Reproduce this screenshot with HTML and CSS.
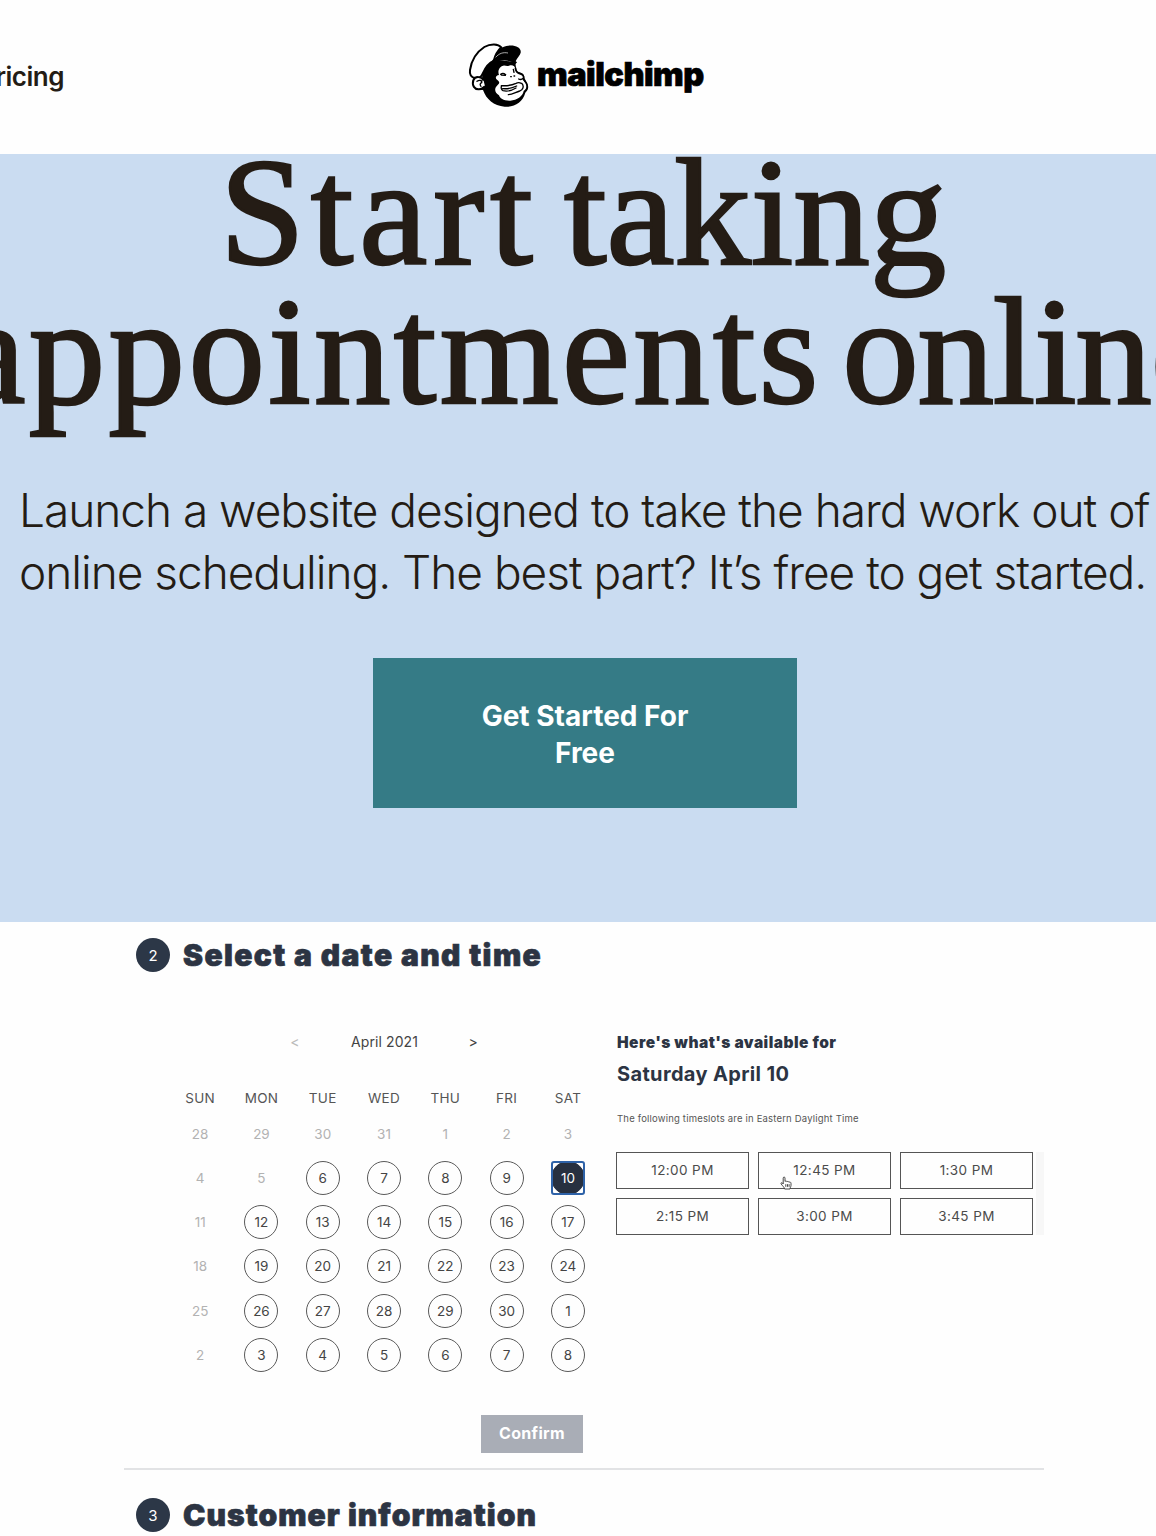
FILE: index.html
```html
<!DOCTYPE html>
<html lang="en">
<head>
<meta charset="utf-8">
<title>Mailchimp appointments</title>
<link rel="stylesheet" href="styles.css">
</head>
<body>
<header class="header">
  <nav class="nav"><a class="nav-link">Pricing</a></nav>
  <a class="brand" aria-label="Mailchimp">
    <svg class="brand-icon" viewBox="0 0 240 240" aria-hidden="true">
      <path fill="#000" d="M68 108C75 92 88 80 102 76L166 80C167 92 168 102 172 110C186 112 194 118 193 128L199 140C206 153 203 164 196 173C188 202 163 217 134 215C101 212 79 193 69 165C54 164 40 157 38 145C36 132 44 123 54 124C59 125 63 128 66 131Z"/>
      <path fill="#fff" d="M117 120C112 108 118 94 130 92C137 91 140 95 147 92C157 88 165 93 166 100C166 107 169 113 176 116C188 118 191 122 189 130C188 137 194 140 198 146C202 154 199 163 191 168C188 184 171 196 151 197C132 198 119 190 117 181C103 172 102 160 113 150C120 145 119 139 111 134C104 129 108 121 117 120Z"/>
      <path fill="#fff" stroke="#000" stroke-width="6" d="M101 78C88 83 76 98 68 116C64 126 56 131 46 129C32 127 28 119 30 105C34 78 50 51 73 36C92 25 115 26 124 37C113 47 105 62 101 78Z"/>
      <path fill="#000" d="M101 76C106 53 119 37 139 33C164 28 185 38 182 53C180 61 172 68 166 80C156 70 130 71 108 79Z"/>
      <path fill="none" stroke="#fff" stroke-width="2" d="M107 67C117 55 130 51 144 54"/>
      <path fill="none" stroke="#000" stroke-width="9" d="M98 79C128 68 154 71 168 85"/>
      <path fill="#fff" stroke="#000" stroke-width="6" d="M71 137C65 124 45 122 40 136C35 151 44 164 57 163C65 163 71 157 75 154"/>
      <path fill="none" stroke="#000" stroke-width="4" stroke-linecap="round" d="M51 139C59 133 67 137 65 143C60 145 59 149 63 154M122 118Q129 112 137 119M124 120L136 121M160 103L162 112M152 125H154M162 123H164"/>
      <path fill="none" stroke="#000" stroke-width="4" stroke-linecap="round" stroke-linejoin="round" d="M124 152C140 153 157 150 168 145Q176 141 184 145M125 152C122 158 124 165 129 167C144 171 158 165 168 159M128 161Q148 163 170 153M185 145C194 154 188 165 179 168C166 172 158 179 145 179M176 132Q183 136 190 130"/>
      <path fill="none" stroke="#000" stroke-width="5" d="M166 98C167 108 170 113 177 115C189 118 193 124 190 132C193 138 199 142 201 149C204 159 200 166 194 170"/>
    </svg>
    <span class="brand-name">mailchimp</span>
  </a>
</header>
<section class="hero">
  <h1 class="hero-title"><span class="title-top"><span class="w-start">Start </span><span class="w-taking">taking</span></span><br><span class="w-appointments">appointments </span><span class="w-online">online</span></h1>
  <p class="hero-copy">Launch a website designed to take the hard work out of<br>online scheduling. The best part? It’s free to get started.</p>
  <a class="cta">Get Started For<br>Free</a>
</section>
<main class="booking">
  <div class="step"><span class="step-num">2</span><h2 class="step-title">Select a date and time</h2></div>
  <div class="scheduler">
    <section class="calendar">
      <div class="month"><span class="prev">&lt;</span><span class="month-name">April 2021</span><span class="next">&gt;</span></div>
      <div class="weekdays"><span>SUN</span><span>MON</span><span>TUE</span><span>WED</span><span>THU</span><span>FRI</span><span>SAT</span></div>
      <div class="days">
        <span>28</span><span>29</span><span>30</span><span>31</span><span>1</span><span>2</span><span>3</span>
        <span>4</span><span>5</span><span class="open">6</span><span class="open">7</span><span class="open">8</span><span class="open">9</span><span class="open selected">10</span>
        <span>11</span><span class="open">12</span><span class="open">13</span><span class="open">14</span><span class="open">15</span><span class="open">16</span><span class="open">17</span>
        <span>18</span><span class="open">19</span><span class="open">20</span><span class="open">21</span><span class="open">22</span><span class="open">23</span><span class="open">24</span>
        <span>25</span><span class="open">26</span><span class="open">27</span><span class="open">28</span><span class="open">29</span><span class="open">30</span><span class="open">1</span>
        <span>2</span><span class="open">3</span><span class="open">4</span><span class="open">5</span><span class="open">6</span><span class="open">7</span><span class="open">8</span>
      </div>
      <button class="confirm">Confirm</button>
    </section>
    <section class="times">
      <h3 class="times-title">Here's what's available for</h3>
      <p class="times-date">Saturday April 10</p>
      <p class="times-note">The following timeslots are in Eastern Daylight Time</p>
      <div class="slots-area">
        <div class="slots">
          <span class="slot">12:00 PM</span>
          <span class="slot">12:45 PM
            <svg class="pointer" viewBox="0 0 12 14" aria-hidden="true"><path d="M3.2 8V2.2C3.2.6 5 .6 5 2.2V5.4C5.8 4.8 6.6 5 6.9 5.7C7.7 5.2 8.6 5.4 8.9 6.2C10 5.7 11 6.2 11 7.4V9.4C11 10.7 10.2 11 10 13H4.6C4.4 11.2 2.5 10 1.2 8C.5 6.6 1.9 6 3.2 8ZM5.8 8.2V10.8M7.5 8.2V10.8M9.1 8.2V10.8" fill="#fff" stroke="#333" stroke-width=".9"/></svg>
          </span>
          <span class="slot">1:30 PM</span>
          <span class="slot">2:15 PM</span>
          <span class="slot">3:00 PM</span>
          <span class="slot">3:45 PM</span>
        </div>
        <div class="scroll-track"></div>
      </div>
    </section>
  </div>
  <div class="step step-next"><span class="step-num">3</span><h2 class="step-title customer">Customer information</h2></div>
</main>
</body>
</html>
```
FILE: styles.css
```css
* { box-sizing: border-box; }
body {
  margin: 0;
  width: 1156px;
  height: 1536px;
  overflow: hidden;
  background: #fefefe;
  color: #241c15;
  font-family: Inter, "Liberation Sans", sans-serif;
}
h1, h2, h3, p { margin: 0; }

.header {
  display: grid;
  grid-template-columns: 460px auto 1fr;
  height: 154px;
}
.nav {
  display: flex;
  justify-content: flex-end;
  width: 64px;
  padding-top: 61px;
}
.nav-link { font-size: 26px; line-height: 32px; font-weight: 600; letter-spacing: -0.5px; }
.brand { display: flex; margin-top: 35px; color: #000; }
.brand-icon { width: 80px; height: 80px; flex: none; }
.brand-name {
  margin: 20px 0 0 -3px;
  font-size: 32.5px;
  line-height: 40px;
  font-weight: 900;
  letter-spacing: -0.5px;
  -webkit-text-stroke: 0.7px #000;
}

.hero {
  display: flex;
  flex-direction: column;
  align-items: center;
  height: 768px;
  overflow: hidden;
  background: #cadcf1;
}
.hero-title {
  margin: -11px 0 0 19px;
  font: 400 153px/139px "Liberation Serif", serif;
  -webkit-text-stroke: 2.6px #241c15;
  text-align: center;
  white-space: nowrap;
  flex: none;
}
.title-top { padding-right: 9px; }
.w-start { letter-spacing: 6px; word-spacing: -19px; }
.w-taking { letter-spacing: 0; }
.w-appointments { letter-spacing: 3.3px; word-spacing: -21px; }
.w-online { letter-spacing: -1.2px; }
.hero-copy {
  width: 1137px;
  margin: 58px 0 0 19px;
  font-size: 46px;
  line-height: 62px;
  font-weight: 300;
  letter-spacing: -1.03px;
  white-space: nowrap;
}
.cta {
  display: flex;
  align-items: center;
  justify-content: center;
  width: 424px;
  height: 150px;
  padding-top: 4px;
  margin: 55px 0 0 14px;
  background: #357b86;
  color: #fff;
  font-size: 28px;
  line-height: 37.5px;
  font-weight: 700;
  letter-spacing: 0;
  text-align: center;
}

.booking { width: 920px; margin-left: 124px; padding-top: 16px; color: #2c3443; }
.step { display: flex; align-items: center; gap: 13px; height: 34px; padding-left: 12px; }
.step-num {
  display: grid;
  place-items: center;
  width: 34px;
  height: 34px;
  border-radius: 50%;
  background: #2c3747;
  color: #fff;
  font-size: 15px;
}
.step-title {
  font-size: 30px;
  line-height: 34px;
  font-weight: 900;
  letter-spacing: 1.4px;
  -webkit-text-stroke: 0.7px #2c3443;
  white-space: nowrap;
}
.customer { letter-spacing: 1.05px; }

.scheduler {
  display: flex;
  height: 498px;
  border-bottom: 2px solid #e2e3e5;
  padding: 59px 0 0 45.5px;
}
.calendar { display: flex; flex-direction: column; width: 430px; margin-right: 17.5px; }
.month {
  display: grid;
  grid-template-columns: 1fr 120px 1fr;
  align-items: center;
  height: 20px;
  text-align: center;
  font-size: 14px;
  color: #444;
}
.month-name { letter-spacing: 0.1px; }
.prev { color: #bbb; text-align: right; padding-right: 25px; }
.next { text-align: left; padding-left: 24px; }
.weekdays, .days { display: grid; grid-template-columns: repeat(7, 61.3px); justify-items: center; align-items: center; }
.weekdays { height: 20px; margin-top: 37px; color: #555; font-size: 13.5px; letter-spacing: 0.3px; }
.days { grid-template-rows: 44px repeat(5, 44.2px); margin-top: 4px; font-size: 13.5px; color: #b2b2b2; }
.days span { display: grid; place-items: center; width: 34px; height: 34px; }
.days .open { border: 1px solid #5a5a5a; border-radius: 50%; color: #444; }
.days .selected { position: relative; background: #273040; border-color: #273040; color: #fff; }
.selected::after {
  content: "";
  position: absolute;
  inset: -1px;
  border: 2px solid #2e62a8;
  border-radius: 3px;
}
.confirm {
  width: 102px;
  height: 38px;
  margin: 38px 0 0 311.5px;
  padding: 0 0 1px;
  border: 0;
  background: #a9adb6;
  color: #fff;
  font: 700 16px Inter, sans-serif;
  letter-spacing: 0.3px;
}

.times { flex: 1; }
.times-title { font-size: 15.5px; line-height: 22px; font-weight: 900; letter-spacing: 0.47px; margin-top: 1px; }
.times-date { font-size: 20px; line-height: 26px; font-weight: 700; letter-spacing: 0.35px; margin-top: 7px; }
.times-note { font-size: 9.5px; line-height: 14px; letter-spacing: 0.19px; margin-top: 25px; color: #555; }
.slots-area { display: flex; gap: 3px; margin-top: 26px; }
.slots { display: grid; grid-template-columns: repeat(3, 133px); gap: 9px; margin-left: -1px; }
.slot {
  display: grid;
  place-items: center;
  position: relative;
  height: 37px;
  padding-bottom: 1px;
  border: 1px solid #555;
  color: #4b4b4b;
  font-size: 13.5px;
  letter-spacing: 0.4px;
}
.pointer { position: absolute; left: 21px; top: 23px; width: 12px; height: 14px; }
.scroll-track { width: 8px; background: #f7f7f7; }
.step-next { margin-top: 28px; }
```
